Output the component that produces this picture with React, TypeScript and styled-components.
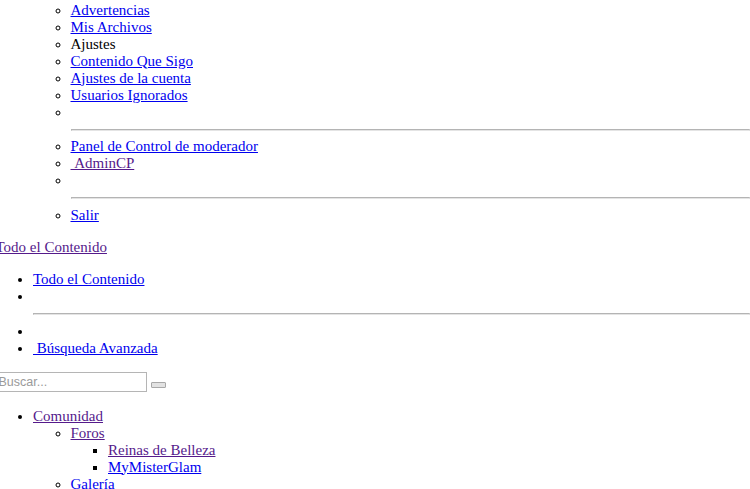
import React from "react";
import styled, { createGlobalStyle } from "styled-components";

const Global = createGlobalStyle`
  html, body {
    margin: 0;
    padding: 0;
    background: #ffffff;
    overflow: hidden;
  }
  body {
    font-family: "Liberation Serif", "Times New Roman", serif;
    font-size: 15px;
    color: #000000;
  }
`;

const Page = styled.div`
  margin-left: -4.5px;
  padding-top: 1.5px;
  width: 754.5px;
`;

const List = styled.ul<{ $type: "disc" | "circle" | "square"; $flush?: boolean; $nested?: boolean }>`
  list-style-type: ${(p) => p.$type};
  padding-left: 37.5px;
  margin: ${(p) => (p.$nested || p.$flush ? "0" : "15px 0")};
  ${(p) => (p.$flush ? "margin-bottom: 15.5px;" : "")}
`;

const Item = styled.li<{ $hidden?: boolean }>`
  ${(p) => (p.$hidden ? "list-style-type: none;" : "")}
`;

const Link = styled.a<{ $visited?: boolean }>`
  color: ${(p) => (p.$visited ? "#551a8b" : "#0000ee")};
  text-decoration: underline;
  cursor: pointer;
`;

const Plain = styled.span`
  color: #000000;
`;

const Rule = styled.hr`
  margin: 8px 0 7.5px;
  border-style: solid;
  border-width: 1px;
  border-color: #b4b4b4 #d8d8d8 #e4e4e4 #b4b4b4;
  height: 0;
`;

const TopLink = styled.div`
  line-height: normal;
`;

const SearchForm = styled.form`
  margin: 0;
  display: flex;
  align-items: flex-start;
  gap: 4px;
  height: 21px;
`;

const SearchInput = styled.input`
  box-sizing: border-box;
  width: 151.5px;
  height: 20px;
  padding: 1px 2px;
  border: 1px solid #b5b5b5;
  font-family: "Liberation Sans", Arial, sans-serif;
  font-size: 12.5px;
  color: #000;
  background: #fff;
  &::placeholder {
    color: #9a9a9a;
  }
`;

const SearchButton = styled.button`
  box-sizing: border-box;
  width: 15px;
  height: 6px;
  margin-top: 10px;
  padding: 0;
  border: 1px solid #a8a8a8;
  border-radius: 1px;
  background: #e2e2e2;
`;

type Entry =
  | { kind: "link"; text: string; visited?: boolean }
  | { kind: "plain"; text: string }
  | { kind: "rule" }
  | { kind: "empty" };

const userMenu: Entry[] = [
  { kind: "link", text: "Advertencias" },
  { kind: "link", text: "Mis Archivos" },
  { kind: "plain", text: "Ajustes" },
  { kind: "link", text: "Contenido Que Sigo" },
  { kind: "link", text: "Ajustes de la cuenta" },
  { kind: "link", text: "Usuarios Ignorados" },
  { kind: "rule" },
  { kind: "link", text: "Panel de Control de moderador" },
  { kind: "link", text: "\u00a0AdminCP", visited: true },
  { kind: "rule" },
  { kind: "link", text: "Salir" },
];

const searchMenu: Entry[] = [
  { kind: "link", text: "Todo el Contenido" },
  { kind: "rule" },
  { kind: "empty" },
  { kind: "link", text: "\u00a0Búsqueda Avanzada" },
];

const renderEntry = (e: Entry, i: number) => {
  switch (e.kind) {
    case "link":
      return (
        <Item key={i}>
          <Link $visited={e.visited}>{e.text}</Link>
        </Item>
      );
    case "plain":
      return (
        <Item key={i}>
          <Plain>{e.text}</Plain>
        </Item>
      );
    case "rule":
      return (
        <Item key={i}>
          {"\u200b"}
          <Rule />
        </Item>
      );
    default:
      return <Item key={i}>{"\u200b"}</Item>;
  }
};

export default function App() {
  return (
    <>
      <Global />
      <Page>
        <List $type="disc" $flush>
          <Item $hidden>
            <List $type="circle" $nested>
              {userMenu.map(renderEntry)}
            </List>
          </Item>
        </List>

        <TopLink>
          <Link $visited>Todo el Contenido</Link>
        </TopLink>

        <List $type="disc">{searchMenu.map(renderEntry)}</List>

        <SearchForm onSubmit={(ev) => ev.preventDefault()}>
          <SearchInput type="text" placeholder="Buscar..." />
          <SearchButton type="submit" />
        </SearchForm>

        <List $type="disc">
          <Item>
            <Link $visited>Comunidad</Link>
            <List $type="circle" $nested>
              <Item>
                <Link $visited>Foros</Link>
                <List $type="square" $nested>
                  <Item>
                    <Link $visited>Reinas de Belleza</Link>
                  </Item>
                  <Item>
                    <Link>MyMisterGlam</Link>
                  </Item>
                </List>
              </Item>
              <Item>
                <Link>Galería</Link>
              </Item>
            </List>
          </Item>
        </List>
      </Page>
    </>
  );
}
